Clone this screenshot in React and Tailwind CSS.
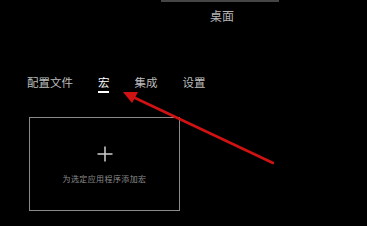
export default function App() {
  const tabs = ['配置文件', '宏', '集成', '设置']
  const active = '宏'

  return (
    <div
      className="relative w-[367px] h-[226px] bg-black overflow-hidden"
      style={{ fontFamily: '"Noto Sans CJK SC", "Noto Sans", sans-serif' }}
    >
      {/* Top "desktop" header */}
      <div className="ml-[161px] w-[118px]">
        <div className="h-[2px] bg-[#454545]" />
        <div className="mt-[8px] text-center text-[12px] leading-[12px] text-[#b5b5b5] pl-[4px]">桌面</div>
      </div>

      {/* Tabs */}
      <div className="mt-[55px] pl-[27px] flex items-start gap-[25px]">
        {tabs.map(t => (
          <div key={t} className="flex flex-col items-center">
            <span
              className={
                'text-[11.5px] leading-[11px] ' +
                (t === active ? 'text-white' : 'text-[#bdbdbd]')
              }
            >
              {t}
            </span>
            {t === active && <div className="mt-[3px] h-[2px] w-[11px] bg-white" />}
          </div>
        ))}
      </div>

      {/* Add macro box */}
      <div className="mt-[24px] ml-[29px] w-[151px] h-[94px] border border-[#8a8a8a] flex flex-col items-center pt-[28px]">
        <svg width="16" height="16" viewBox="0 0 16 16">
          <path d="M8 0.5V15.5M0.5 8H15.5" stroke="#d0d0d0" strokeWidth="1.5" />
        </svg>
        <div className="mt-[13px] text-[8px] leading-[8px] tracking-[0.4px] text-[#8c8c8c]">为选定应用程序添加宏</div>
      </div>

      {/* Red arrow annotation */}
      <svg className="absolute inset-0" width="367" height="226" viewBox="0 0 367 226">
        <line x1="273" y1="163" x2="133" y2="97" stroke="#d11212" strokeWidth="2.5" strokeLinecap="round" />
        <polygon points="123,92 138,92 132,103" fill="#d11212" />
      </svg>
    </div>
  )
}
